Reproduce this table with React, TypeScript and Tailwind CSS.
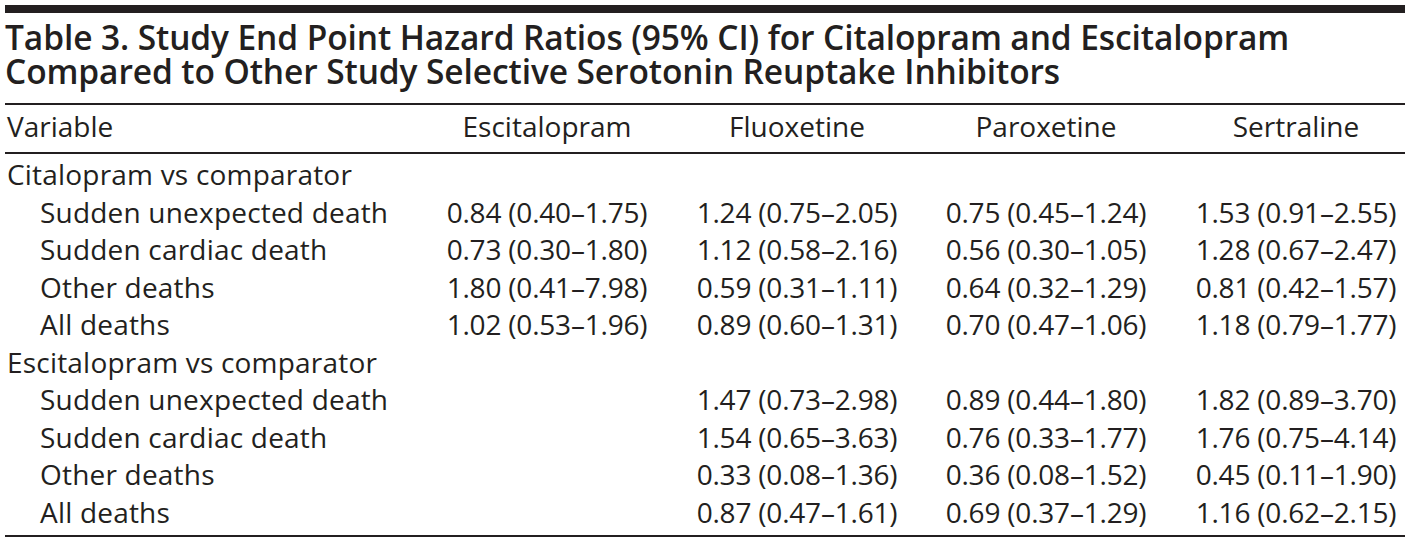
const rows: { label: string; group?: boolean; values: string[] }[] = [
  { label: "Citalopram vs comparator", group: true, values: [] },
  { label: "Sudden unexpected death", values: ["0.84 (0.40–1.75)", "1.24 (0.75–2.05)", "0.75 (0.45–1.24)", "1.53 (0.91–2.55)"] },
  { label: "Sudden cardiac death", values: ["0.73 (0.30–1.80)", "1.12 (0.58–2.16)", "0.56 (0.30–1.05)", "1.28 (0.67–2.47)"] },
  { label: "Other deaths", values: ["1.80 (0.41–7.98)", "0.59 (0.31–1.11)", "0.64 (0.32–1.29)", "0.81 (0.42–1.57)"] },
  { label: "All deaths", values: ["1.02 (0.53–1.96)", "0.89 (0.60–1.31)", "0.70 (0.47–1.06)", "1.18 (0.79–1.77)"] },
  { label: "Escitalopram vs comparator", group: true, values: [] },
  { label: "Sudden unexpected death", values: ["", "1.47 (0.73–2.98)", "0.89 (0.44–1.80)", "1.82 (0.89–3.70)"] },
  { label: "Sudden cardiac death", values: ["", "1.54 (0.65–3.63)", "0.76 (0.33–1.77)", "1.76 (0.75–4.14)"] },
  { label: "Other deaths", values: ["", "0.33 (0.08–1.36)", "0.36 (0.08–1.52)", "0.45 (0.11–1.90)"] },
  { label: "All deaths", values: ["", "0.87 (0.47–1.61)", "0.69 (0.37–1.29)", "1.16 (0.62–2.15)"] },
]

const headers = ["Escitalopram", "Fluoxetine", "Paroxetine", "Sertraline"]

const grid = "grid grid-cols-[400px_284px_216px_282px_218px]"

export default function App() {
  return (
    <div className="min-h-[542px] bg-white px-[5px] pt-[5px] font-['Open_Sans',sans-serif] text-[#231f20]">
      <div className="w-[1400px]">
        <div className="h-[8px] bg-[#231f20]" />
        <h1 className="mt-[7px] text-[33.5px] font-semibold leading-[34px] tracking-[-0.1px]">
          Table 3. Study End Point Hazard Ratios (95% CI) for Citalopram and Escitalopram
          <br />
          Compared to Other Study Selective Serotonin Reuptake Inhibitors
        </h1>
        <div className="mt-[15px] h-[2px] bg-[#231f20]" />
        <div className={`${grid} pt-[3px] pb-[6px] text-[28px] leading-[37.5px]`}>
          <div className="pl-[2px]">Variable</div>
          {headers.map((h) => (
            <div key={h} className="text-center">
              {h}
            </div>
          ))}
        </div>
        <div className="h-[2px] bg-[#231f20]" />
        <div className="pt-[2.5px] pb-[4px] text-[28px] leading-[37.5px]">
          {rows.map((r, i) => (
            <div key={i} className={grid}>
              <div className={r.group ? "pl-[2px] tracking-[0.2px]" : "pl-[35px] tracking-[0.2px]"}>{r.label}</div>
              {!r.group &&
                r.values.map((v, j) => (
                  <div key={j} className="text-center tracking-[-0.2px]">
                    {v}
                  </div>
                ))}
            </div>
          ))}
        </div>
        <div className="h-[2px] bg-[#231f20]" />
      </div>
    </div>
  )
}
